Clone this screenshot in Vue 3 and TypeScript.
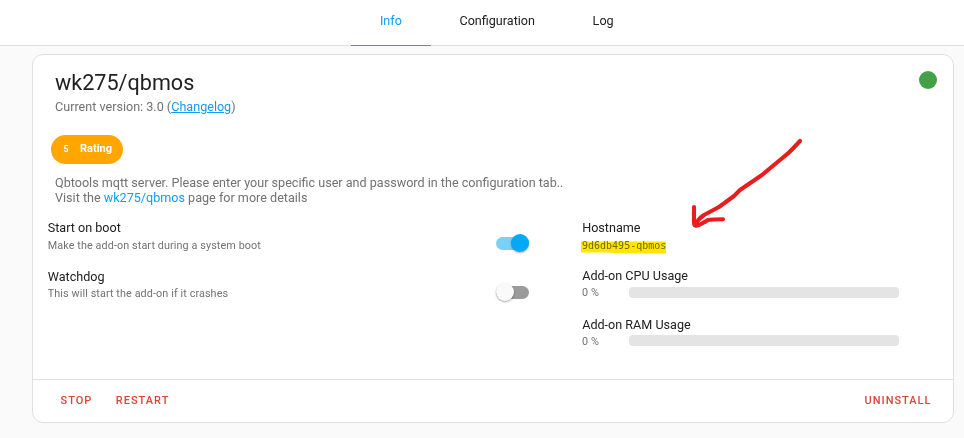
<script setup lang="ts">
import { ref } from 'vue'

interface Option {
  title: string
  description: string
  enabled: boolean
}

const tabs = ['Info', 'Configuration', 'Log']
const activeTab = ref('Info')

const options = ref<Option[]>([
  { title: 'Start on boot', description: 'Make the add-on start during a system boot', enabled: true },
  { title: 'Watchdog', description: 'This will start the add-on if it crashes', enabled: false },
])

const metrics = [
  { title: 'Add-on CPU Usage', value: 0 },
  { title: 'Add-on RAM Usage', value: 0 },
]
</script>

<template>
  <div class="page">
    <nav class="tabs">
      <button
        v-for="tab in tabs"
        :key="tab"
        class="tab"
        :class="{ active: tab === activeTab }"
        @click="activeTab = tab"
      >{{ tab }}</button>
    </nav>

    <main class="card">
      <div class="content">
        <header class="heading">
          <div>
            <h1>wk275/qbmos</h1>
            <p class="version">Current version: 3.0 (<a class="changelog" href="#">Changelog</a>)</p>
          </div>
          <span class="status"></span>
        </header>

        <div class="chip"><span class="score">5</span><span>Rating</span></div>

        <p class="description">
          Qbtools mqtt server. Please enter your specific user and password in the configuration tab..<br />
          Visit the <a href="#">wk275/qbmos</a> page for more details
        </p>

        <div class="columns">
          <section class="options">
            <div v-for="option in options" :key="option.title" class="row option">
              <div>
                <div class="label">{{ option.title }}</div>
                <div class="sub">{{ option.description }}</div>
              </div>
              <button
                class="switch"
                :class="{ on: option.enabled }"
                :aria-label="option.title"
                @click="option.enabled = !option.enabled"
              ><span class="thumb"></span></button>
            </div>
          </section>

          <section class="details">
            <div class="row">
              <div class="label">Hostname</div>
              <div class="sub host">
                <code>9d6db495-qbmos</code>
                <svg class="marker" width="87" height="15" viewBox="0 0 87 15">
                  <path d="M1 0.5 H86 V12.4 L66 12.4 L45 12.5 L26 11.4 L1 11.4Z" fill="#ffe600" />
                </svg>
              </div>
            </div>
            <div v-for="metric in metrics" :key="metric.title" class="row">
              <div class="label">{{ metric.title }}</div>
              <div class="sub metric">
                <span class="value">{{ metric.value }} %</span>
                <span class="bar"><span class="fill" :style="{ width: metric.value + '%' }"></span></span>
              </div>
            </div>
          </section>
        </div>
      </div>

      <footer class="actions">
        <button>STOP</button>
        <button>RESTART</button>
        <button class="last">UNINSTALL</button>
      </footer>
    </main>

    <svg class="arrow" width="120" height="100" viewBox="0 0 120 100" fill="none" stroke="#e81e1e" stroke-width="4.1" stroke-linecap="round" stroke-linejoin="round">
      <path d="M110 6 Q99 18 96 20 L72 40 L50 55 L44 61 L29 72 L14 80 Q8 84 5 90" />
      <path d="M4 72 L4 88 Q4 92 9 90 Q15 87 18 85 Q22 84.5 33 84.3" />
    </svg>
  </div>
</template>

<style>
body {
  background: #fafafa;
  overflow: hidden;
}
</style>

<style scoped>
.page {
  position: relative;
  height: 438px;
  font-family: Roboto, 'Liberation Sans', sans-serif;
  font-size: 12.6px;
  color: #212121;
}

button {
  border: 0;
  padding: 0;
  background: none;
  font: inherit;
  color: inherit;
}

h1, p { margin: 0; }

a {
  color: #129bf4;
  text-decoration: none;
}

.tabs {
  display: flex;
  justify-content: center;
  height: 45px;
  padding-left: 29.6px;
  background: #fff;
  border-bottom: 1px solid #e0e0e0;
}

.tab {
  height: 46px;
  padding: 0 28.8px 5px;
  border-bottom: 1px solid transparent;
  font-weight: 400;
}

.tab.active {
  color: #129bf4;
  border-color: #03a9f4;
}

.card {
  display: flex;
  flex-direction: column;
  box-sizing: border-box;
  width: 922px;
  height: 369px;
  margin: 8px 0 0 32px;
  background: #fff;
  border: 1px solid #e0e0e0;
  border-radius: 11px;
}

.content {
  flex: 1;
  padding: 12px 15px 0 14px;
}

.heading {
  display: flex;
  justify-content: space-between;
  padding-left: 8px;
}

h1 {
  font-size: 21.6px;
  font-weight: 400;
  line-height: 31px;
}

.version {
  line-height: 18px;
  color: #727272;
}

.changelog { text-decoration: underline; }

.status {
  width: 18px;
  height: 18px;
  margin: 4px 1px 0 0;
  border-radius: 50%;
  background: #43a047;
}

.chip {
  display: flex;
  align-items: center;
  box-sizing: border-box;
  width: 72px;
  height: 29px;
  margin: 19px 0 0 4px;
  padding: 0 0 2px 12.5px;
  gap: 10.5px;
  border-radius: 15px;
  background: #ffa600;
  color: #fff;
  font-size: 11px;
  font-weight: 700;
}

.score {
  width: 6px;
  font-size: 9px;
}

.description {
  margin: 12px 0 0 8px;
  line-height: 14.8px;
  color: #727272;
}

.columns {
  display: grid;
  grid-template-columns: 481px 317px;
  column-gap: 53px;
  margin: 13px 0 0 1px;
}

.row { height: 48.5px; }

.option {
  display: flex;
  justify-content: space-between;
  height: 49px;
}

.label { line-height: 18px; }

.sub {
  font-size: 10.8px;
  line-height: 17px;
  letter-spacing: 0.1px;
  color: #727272;
}

.option:last-child .sub { margin-top: -1px; }

.options .label,
.options .sub { margin-left: -0.3px; }

.details .label { margin-left: 0.2px; }

.switch {
  display: flex;
  align-items: center;
  width: 33px;
  height: 13px;
  margin-top: 18px;
  border-radius: 7px;
  background: #9b9b9b;
}

.switch.on { background: #7bd0f8; }

.thumb {
  flex: none;
  width: 18px;
  height: 18px;
  border-radius: 50%;
  background: #fafafa;
  box-shadow: 0 1px 2px rgba(0, 0, 0, 0.35);
}

.on .thumb {
  margin-left: 14.5px;
  background: #03a9f4;
}

.host {
  position: relative;
  height: 17px;
  letter-spacing: 0;
}

code {
  display: block;
  font-family: 'DejaVu Sans Mono', monospace;
  font-size: 10px;
}

.marker {
  position: absolute;
  left: -2px;
  top: 4px;
  mix-blend-mode: multiply;
}

.metric {
  display: flex;
  align-items: flex-start;
  margin-top: -0.8px;
  line-height: 18px;
}

.value { width: 47px; }

.bar {
  flex: 1;
  height: 11px;
  margin-top: 2.5px;
  border-radius: 4px;
  background: #e4e4e4;
  overflow: hidden;
}

.fill {
  display: block;
  height: 100%;
  background: #43a047;
}

.actions {
  display: flex;
  align-items: center;
  gap: 23.5px;
  height: 42px;
  padding: 0 21.5px 0 27.5px;
  border-top: 1px solid #e0e0e0;
  color: #db4437;
  font-size: 11px;
  font-weight: 500;
  letter-spacing: 1px;
}

.actions button {
  padding-bottom: 1px;
  letter-spacing: inherit;
}

.last { margin-left: auto; }

.arrow {
  position: absolute;
  left: 690px;
  top: 135px;
}
</style>
